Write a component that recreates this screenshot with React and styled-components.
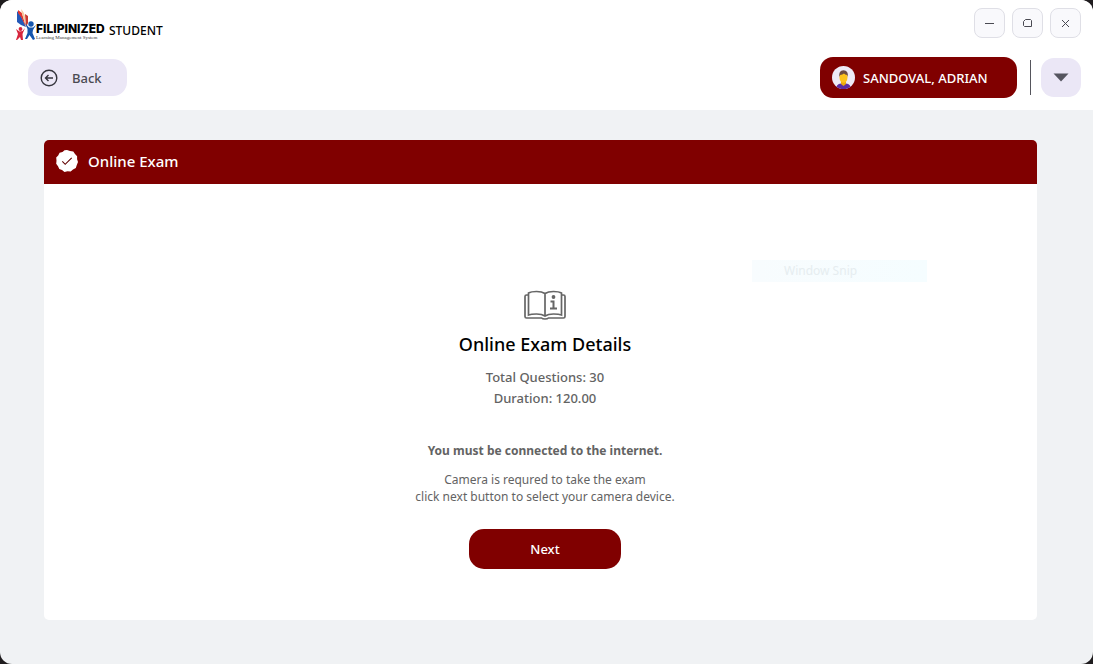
import React from "react";
import styled, { createGlobalStyle, ThemeProvider } from "styled-components";

const theme = {
  maroon: "#800000",
  lavender: "#ebe7f6",
  page: "#f0f2f4",
  grey: "#636363",
  ink: "#4a4a52"
};

const GlobalStyle = createGlobalStyle`
  * {
    box-sizing: border-box;
  }
  body {
    margin: 0;
    background: #1f1c1e;
    font-family: "Noto Sans", "Open Sans", sans-serif;
    font-size: 12px;
    color: #000;
  }
  button {
    font: inherit;
    font-size: 13px;
    border: 0;
    padding: 0;
    cursor: pointer;
  }
  h1, h2, p {
    margin: 0;
  }
  svg {
    display: block;
    flex: none;
  }
`;

const Window = styled.div`
  display: flex;
  flex-direction: column;
  min-height: 100vh;
  border-radius: 12px;
  overflow: hidden;
  background: ${props => props.theme.page};
`;

const StyledHeader = styled.header`
  background: #fff;
  padding: 8px 12px 12px 16px;
`;

const TitleBar = styled.div`
  display: flex;
  justify-content: space-between;
  align-items: flex-start;
  height: 49px;
`;

const Brand = styled.div`
  display: flex;
  align-items: center;
  padding-top: 1px;
`;

const WordMark = styled.div`
  width: 73px;
  padding-top: 12px;
`;

const WordName = styled.div`
  font: 800 12px/12px Inter, sans-serif;
  white-space: nowrap;
`;

const TagLine = styled.div`
  font: 5px/5px "Liberation Serif", serif;
  white-space: nowrap;
  color: #333;
`;

const Product = styled.span`
  font-size: 12px;
  font-weight: 500;
  padding-top: 10px;
`;

const WindowButtons = styled.div`
  display: flex;
  gap: 7px;
`;

const WindowButton = styled.button`
  display: grid;
  place-items: center;
  width: 31px;
  height: 30px;
  border: 1px solid #dfdfe6;
  border-radius: 8px;
  background: #f9f9fc;
`;

const Toolbar = styled.div`
  display: flex;
  align-items: center;
  height: 41px;
  padding-left: 12px;
`;

const BackButton = styled.button`
  display: flex;
  align-items: center;
  gap: 14px;
  width: 99px;
  height: 37px;
  padding-left: 12px;
  border-radius: 14px;
  background: ${props => props.theme.lavender};
  color: ${props => props.theme.ink};
  font-weight: 500;
`;

const UserButton = styled.button`
  display: flex;
  align-items: center;
  gap: 8px;
  width: 197px;
  height: 41px;
  margin-left: auto;
  padding-left: 12px;
  border-radius: 13px;
  background: ${props => props.theme.maroon};
  color: #fff;
  font-weight: 500;
`;

const Divider = styled.div`
  width: 1px;
  height: 35px;
  margin: 0 10px 0 13px;
  background: #55555c;
`;

const MenuButton = styled.button`
  display: grid;
  place-items: center;
  width: 40px;
  height: 39px;
  border-radius: 13px;
  background: ${props => props.theme.lavender};
`;

const Main = styled.main`
  flex: 1;
  display: flex;
  padding: 30px 56px 44px 44px;
`;

const Card = styled.section`
  flex: 1;
  display: flex;
  flex-direction: column;
  border-radius: 5px;
  overflow: hidden;
  background: #fff;
`;

const CardHeader = styled.div`
  display: flex;
  align-items: center;
  gap: 9px;
  height: 44px;
  padding: 0 11px 2px;
  background: ${props => props.theme.maroon};
  color: #fff;
`;

const CardTitle = styled.h1`
  font-size: 15px;
  line-height: 20px;
  font-weight: 500;
`;

const CardBody = styled.div`
  position: relative;
  flex: 1;
  display: flex;
  flex-direction: column;
  align-items: center;
  padding: 106px 0 51px 9px;
  text-align: center;
  color: ${props => props.theme.grey};
`;

const DetailsTitle = styled.h2`
  margin: 12px 0 11px;
  font-size: 18px;
  line-height: 24px;
  font-weight: 500;
  color: #000;
`;

const Detail = styled.p`
  font-size: 13px;
  line-height: 21px;
  font-weight: 500;
`;

const Notice = styled.p`
  margin: 32px 0 10px;
  line-height: 20px;
  font-weight: 700;
`;

const Hint = styled.p`
  line-height: 17px;
`;

const NextButton = styled.button`
  width: 152px;
  height: 40px;
  margin-top: 24px;
  border-radius: 15px;
  background: ${props => props.theme.maroon};
  color: #fff;
  font-weight: 500;
`;

const SnipGhost = styled.div`
  position: absolute;
  top: 76px;
  right: 110px;
  width: 175px;
  height: 22px;
  padding-left: 32px;
  background: linear-gradient(90deg, #f8fcfe, #f5fdff);
  color: #e6edf0;
  font-size: 12px;
  line-height: 22px;
  text-align: left;
`;

const LogoMark = () => (
  <svg width="20" height="32" viewBox="0 0 20 32" aria-hidden="true">
    <path d="M1 2 5 7 10 18 5 16 1 13Z" fill="#2459b8" />
    <path d="M2 1 6 4 10 18 5 8 2 4Z" fill="#e3342f" />
    <path d="M5 0Q9 4 9 9L10 18 6 5Z" fill="#f6c9a0" />
    <path d="M9 5 12 7 12 14 10 18Z" fill="#c9392f" />
    <circle cx="15" cy="15" r="2.7" fill="#1656ae" />
    <circle cx="4.5" cy="20" r="1.9" fill="#d7263d" />
    <path d="M9 14 13 18.5 17 18.5 20 16 17 21 16.5 24 19 30 17 31 13.5 26 11 30 9 30 11.5 24 11.5 20Z" fill="#1656ae" />
    <path d="M0 20 3.5 22.5 6.5 22 9 19 6.5 25 7 31 5 31 4 28 1 31 0 31 2 25Z" fill="#d7263d" />
  </svg>
);

const BackIcon = () => (
  <svg width="18" height="18" viewBox="0 0 18 18" fill="none" stroke="#35353d" strokeWidth="1.4" aria-hidden="true">
    <circle cx="9" cy="9" r="7.8" />
    <path d="M13 9H5.5M8.5 6 5.5 9l3 3" />
  </svg>
);

const Avatar = () => (
  <svg width="23" height="23" viewBox="0 0 23 23" aria-hidden="true">
    <defs>
      <clipPath id="avatar">
        <circle cx="11.5" cy="11.5" r="11.5" />
      </clipPath>
    </defs>
    <g clipPath="url(#avatar)">
      <rect width="23" height="23" fill="#eeeaf6" />
      <path d="M4 23Q4 18 9 17.5H14Q19 18 19 23Z" fill="#5b2da3" />
      <path d="M9 14H14V18L11.5 20 9 18Z" fill="#e8a90f" />
      <ellipse cx="11.5" cy="11.5" rx="4" ry="5.3" fill="#fcc21b" />
      <path d="M7.2 11Q6.5 4.5 11.5 4.2 16.5 4.2 15.9 11L15 9Q13 8.6 12 7.4 10.5 8.6 8.2 9Z" fill="#6d4c41" />
    </g>
  </svg>
);

const BadgeIcon = () => (
  <svg width="24" height="24" viewBox="0 0 24 24" aria-hidden="true">
    <path
      d="M12 1 15 2 18.3 2.6 20 5 22.1 7.3 22.1 10.3 23 13 21.8 16 20.8 19 18 20.5 15.7 22.4 12.5 22.3 9.5 22.9 7 21.1 4.3 20 3 17.2 1.2 14.8 1.5 11.7 1.2 8.6 3.2 6.5 4.6 3.7 7.5 2.9 9.5 1.2Z"
      fill="#fff"
    />
    <path d="M7.3 12.4 10.2 15.3 16.7 8.8" fill="none" stroke="#600000" strokeWidth="1.1" />
  </svg>
);

const BookIcon = () => (
  <svg width="42" height="30" viewBox="0 0 42 30" fill="none" stroke="#666" strokeWidth="1.7" aria-hidden="true">
    <path d="M21 3.5Q18 1.5 12.5 1.5T4.5 3V25Q7 24 12.5 24T21 26Q24 24 29.5 24T37.5 25V3Q35 1.5 29.5 1.5T21 3.5V26" />
    <path d="M4.5 5H2.5Q1 5 1 6.5V26.5Q1 28 2.5 28H17.5Q18.5 29 21 29T24.5 28H39.5Q41 28 41 26.5V6.5Q41 5 39.5 5H37.5" />
    <path d="M26.5 11.5H29.5V18M26 18.5H33" strokeWidth="2" />
    <circle cx="29.5" cy="7" r="1.9" fill="#666" stroke="none" />
  </svg>
);

const Header = () => (
  <StyledHeader>
    <TitleBar>
      <Brand>
        <LogoMark />
        <WordMark>
          <WordName>FILIPINIZED</WordName>
          <TagLine>Learning Management System</TagLine>
        </WordMark>
        <Product>STUDENT</Product>
      </Brand>
      <WindowButtons>
        <WindowButton aria-label="Minimize">
          <svg width="9" height="9" fill="none" stroke="#4a4a52">
            <path d="M0 4.5H9" />
          </svg>
        </WindowButton>
        <WindowButton aria-label="Maximize">
          <svg width="9" height="9" fill="none" stroke="#4a4a52">
            <path d="M2.5.5H7.5L8.5 1.5V7.5H1.5L.5 6.5V2.5Z" />
          </svg>
        </WindowButton>
        <WindowButton aria-label="Close">
          <svg width="9" height="9" fill="none" stroke="#4a4a52">
            <path d="M1 1 8 8M8 1 1 8" />
          </svg>
        </WindowButton>
      </WindowButtons>
    </TitleBar>
    <Toolbar>
      <BackButton>
        <BackIcon />
        Back
      </BackButton>
      <UserButton>
        <Avatar />
        SANDOVAL, ADRIAN
      </UserButton>
      <Divider />
      <MenuButton aria-label="Open menu">
        <svg width="16" height="9" aria-hidden="true">
          <path d="M.5.5H15.5L8 8.5Z" fill="#55555f" />
        </svg>
      </MenuButton>
    </Toolbar>
  </StyledHeader>
);

const ExamCard = ({ questions, duration }) => (
  <Card>
    <CardHeader>
      <BadgeIcon />
      <CardTitle>Online Exam</CardTitle>
    </CardHeader>
    <CardBody>
      <BookIcon />
      <DetailsTitle>Online Exam Details</DetailsTitle>
      <Detail>Total Questions: {questions}</Detail>
      <Detail>Duration: {duration}</Detail>
      <Notice>You must be connected to the internet.</Notice>
      <Hint>
        Camera is requred to take the exam
        <br />
        click next button to select your camera device.
      </Hint>
      <NextButton>Next</NextButton>
      <SnipGhost>Window Snip</SnipGhost>
    </CardBody>
  </Card>
);

const App = () => (
  <ThemeProvider theme={theme}>
    <GlobalStyle />
    <Window>
      <Header />
      <Main>
        <ExamCard questions={30} duration="120.00" />
      </Main>
    </Window>
  </ThemeProvider>
);

export default App;
